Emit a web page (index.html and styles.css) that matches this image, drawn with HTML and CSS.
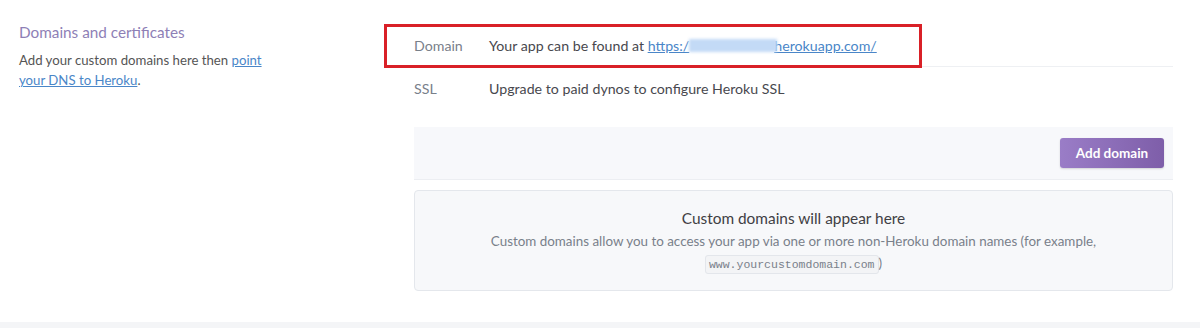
FILE: index.html
```html
<!DOCTYPE html>
<html lang="en">
<head>
  <meta charset="UTF-8">
  <title>Domains and certificates</title>
  <link rel="stylesheet" href="styles.css">
</head>
<body>
  <section class="settings">
    <div class="intro">
      <h3>Domains and certificates</h3>
      <p>Add your custom domains here then <a href="#">point your DNS to Heroku</a>.</p>
    </div>

    <div class="details">
      <div class="row row-domain">
        <span class="label">Domain</span>
        <span class="value">Your app can be found at <a href="#">https:/<span class="blur"></span>herokuapp.com/</a></span>
        <div class="highlight"></div>
      </div>
      <div class="row">
        <span class="label">SSL</span>
        <span class="value">Upgrade to paid dynos to configure Heroku SSL</span>
      </div>

      <div class="toolbar">
        <button class="btn">Add domain</button>
      </div>

      <div class="empty">
        <h4>Custom domains will appear here</h4>
        <p>Custom domains allow you to access your app via one or more non-Heroku domain names (for example,<br><code>www.yourcustomdomain.com</code>)</p>
      </div>
    </div>
  </section>
  <div class="footer-strip"></div>
</body>
</html>
```

FILE: styles.css
```css
body {
  margin: 0;
  font-family: Lato, "Open Sans", sans-serif;
  color: #3f3f44;
  background: #fff;
}
.settings {
  display: flex;
  height: 322px;
}
.intro {
  width: 256px;
  padding: 23px 0 0 19px;
  flex: none;
}
.intro h3 {
  margin: 0;
  font-size: 15.3px;
  font-weight: 400;
  color: #8e7fb6;
}
.intro p {
  margin: 9px 0 0;
  font-size: 13.2px;
  line-height: 20px;
  color: #555;
}
a {
  color: #4a86c8;
  text-decoration: underline;
}
.details {
  margin-left: 139px;
  width: 759px;
  padding-top: 24px;
}
.row {
  display: flex;
  align-items: center;
  height: 42px;
  font-size: 14.2px;
  position: relative;
}
.row-domain {
  border-bottom: 1px solid #eef0f3;
}
.label {
  width: 75px;
  color: #79808a;
  flex: none;
}
.value {
  color: #48484e;
}
.blur {
  display: inline-block;
  width: 88px;
  height: 13px;
  margin: 0 -3px -1px 0;
  background: #c3daf6;
  filter: blur(1.5px);
}
.highlight {
  position: absolute;
  left: -30px;
  top: 0;
  width: 532px;
  height: 38px;
  border: 3px solid #d92027;
}
.toolbar {
  margin-top: 18px;
  height: 52px;
  background: #f7f8fb;
  border-bottom: 1px solid #eceef2;
  display: flex;
  align-items: center;
  justify-content: flex-end;
  padding-right: 9px;
}
.btn {
  width: 104px;
  height: 30px;
  border: none;
  border-radius: 3px;
  background: linear-gradient(to right, #9a7dc7, #7e5ea9);
  color: #fff;
  font-family: Lato, sans-serif;
  font-size: 13.5px;
  font-weight: 700;
  box-shadow: 0 1px 2px rgba(0, 0, 0, 0.15);
}
.empty {
  margin-top: 10px;
  height: 101px;
  border: 1px solid #e4e7ec;
  border-radius: 4px;
  background: #f7f8fa;
  text-align: center;
  box-sizing: border-box;
  padding-top: 18px;
}
.empty h4 {
  margin: 0;
  font-size: 15.4px;
  font-weight: 400;
  color: #3f3f44;
}
.empty p {
  margin: 3px 0 0;
  font-size: 13.4px;
  line-height: 22px;
  color: #79808a;
}
.empty code {
  font-family: "Liberation Mono", monospace;
  font-size: 11.5px;
  color: #79808a;
  background: #f3f4f6;
  border: 1px solid #e3e6eb;
  border-radius: 3px;
  padding: 2px 3px;
}
.footer-strip {
  height: 6px;
  background: #f4f5f7;
}
```
